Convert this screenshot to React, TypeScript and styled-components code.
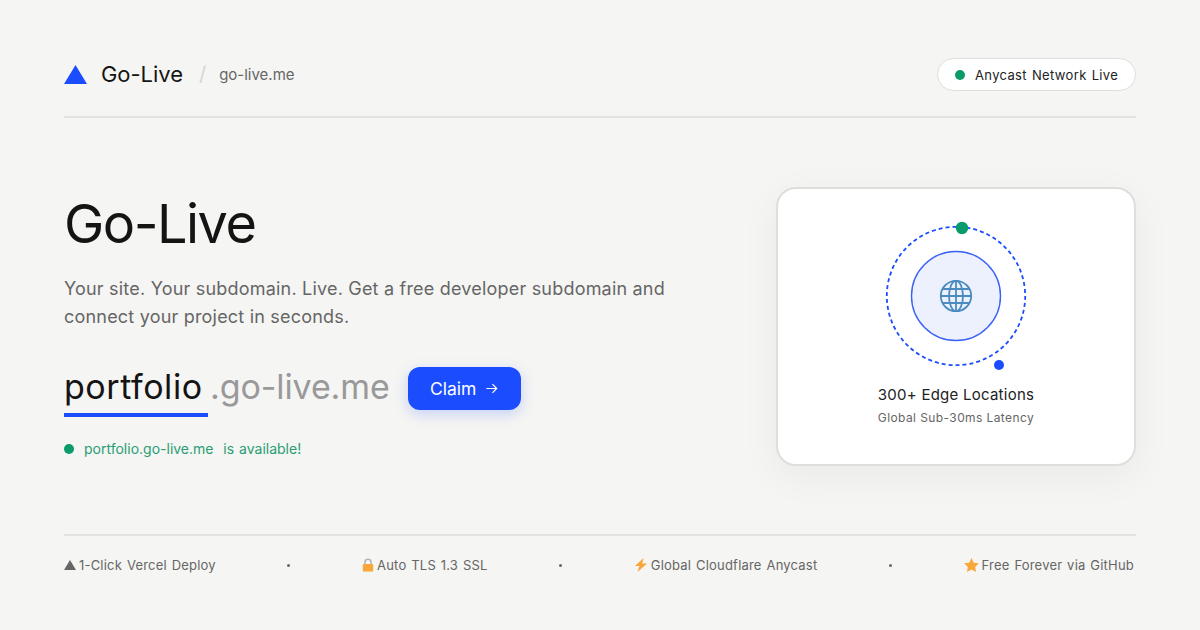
import { Fragment, FunctionComponent, ReactNode } from "react";
import styled, { createGlobalStyle } from "styled-components";

const GlobalStyle = createGlobalStyle`
  html, body {
    margin: 0;
    padding: 0;
    background: #f5f5f3;
  }
  * {
    box-sizing: border-box;
  }
`;

const Page = styled.div`
  width: 1200px;
  height: 630px;
  padding: 58px 64px 0;
  display: flex;
  flex-direction: column;
  background: #f5f5f3;
  font-family: Inter, "Liberation Sans", sans-serif;
  color: #111;
  overflow: hidden;
`;

const Header = styled.header`
  height: 60px;
  padding-bottom: 26px;
  display: flex;
  align-items: center;
  justify-content: space-between;
  border-bottom: 2px solid #e2e2df;
`;

const Brand = styled.div`
  display: flex;
  align-items: center;
`;

const BrandName = styled.span`
  margin-left: 14px;
  font-size: 22px;
  line-height: 28px;
  letter-spacing: -0.05px;
  color: #151515;
`;

const BrandSlash = styled.span`
  margin-left: 16px;
  font-size: 20px;
  color: #d6d6d3;
`;

const BrandDomain = styled.span`
  margin-left: 13px;
  font-size: 15px;
  color: #666;
`;

const Pill = styled.div`
  width: 199px;
  height: 33px;
  padding: 1px 0 0 17px;
  display: flex;
  align-items: center;
  gap: 10px;
  background: #fff;
  border: 1.5px solid #dededb;
  border-radius: 17px;
  font-size: 13px;
  letter-spacing: 0.35px;
  word-spacing: 1px;
  color: #222;
`;

const Dot = styled.span<{ $size: number }>`
  width: ${(p) => p.$size}px;
  height: ${(p) => p.$size}px;
  border-radius: 50%;
  background: #0a9a6b;
  flex: none;
`;

const Main = styled.main`
  height: 418px;
  display: flex;
  justify-content: space-between;
  align-items: center;
  border-bottom: 2px solid #e2e2df;
`;

const Intro = styled.section`
  width: 640px;
  display: flex;
  flex-direction: column;
  margin-top: -3px;
`;

const Title = styled.h1`
  margin: 0;
  font-size: 54px;
  line-height: 68px;
  font-weight: 400;
  letter-spacing: -1.5px;
  color: #141414;
`;

const Lead = styled.p`
  margin: 17px 0 0;
  font-size: 18px;
  line-height: 28px;
  letter-spacing: 0.2px;
  color: #666;
  white-space: nowrap;
`;

const ClaimRow = styled.div`
  margin-top: 34px;
  height: 52px;
  display: flex;
  align-items: flex-start;
`;

const Subdomain = styled.span`
  height: 52px;
  width: 144px;
  font-size: 34px;
  line-height: 44px;
  letter-spacing: 0.55px;
  color: #141414;
  border-bottom: 4px solid #1b4dff;
`;

const Suffix = styled.span`
  margin-left: 2px;
  font-size: 34px;
  line-height: 44px;
  letter-spacing: -0.1px;
  color: #999;
`;

const ClaimButton = styled.button`
  margin: 2px 0 0 18px;
  width: 113px;
  height: 43px;
  display: flex;
  align-items: center;
  justify-content: center;
  gap: 9px;
  padding: 0;
  border: none;
  border-radius: 12px;
  background: #1b4dff;
  color: #fff;
  font-family: inherit;
  font-size: 17.5px;
  box-shadow: 0 4px 14px rgba(27, 77, 255, 0.22);
`;

const Status = styled.div`
  margin-top: 22px;
  display: flex;
  align-items: center;
  gap: 10px;
  font-size: 14px;
  line-height: 20px;
  color: #2a9d74;
  word-spacing: 1px;
  white-space: pre;
`;

const Card = styled.aside`
  width: 360px;
  height: 279px;
  display: flex;
  flex-direction: column;
  align-items: center;
  padding-top: 30px;
  background: #fff;
  border: 2px solid #dededb;
  border-radius: 20px;
  box-shadow: 0 10px 40px rgba(0, 0, 0, 0.05);
`;

const CardTitle = styled.div`
  margin-top: 14px;
  font-size: 15px;
  line-height: 20px;
  letter-spacing: 0.25px;
  color: #222;
`;

const CardSub = styled.div`
  margin-top: 5px;
  font-size: 12px;
  line-height: 16px;
  letter-spacing: 0.4px;
  color: #666;
`;

const Footer = styled.footer`
  padding: 20px 2px 0 0;
  display: flex;
  justify-content: space-between;
  align-items: center;
  font-size: 13px;
  line-height: 18px;
  letter-spacing: 0.2px;
  word-spacing: 1px;
  color: #666;
`;

const FooterItem = styled.span`
  display: flex;
  align-items: center;
  gap: 3px;
  white-space: pre;
`;

const FooterDot = styled.span`
  width: 3px;
  height: 3px;
  border-radius: 50%;
  background: #666;
`;

const TriangleIcon: FunctionComponent<{ size: number; color: string }> = ({
  size,
  color,
}) => (
  <svg width={size} height={(size * 19) / 23} viewBox="0 0 23 19">
    <path d="M11.5 0 23 19H0z" fill={color} />
  </svg>
);

const LockIcon = () => (
  <svg width="12" height="14" viewBox="0 0 12 14">
    <path
      d="M3 6.5V4.2a3 3 0 0 1 6 0v2.3"
      fill="none"
      stroke="#b3b3b3"
      strokeWidth="1.5"
    />
    <rect x="0.8" y="6" width="10.4" height="7.6" rx="1.2" fill="#f9a63a" />
  </svg>
);

const BoltIcon = () => (
  <svg width="14" height="14" viewBox="0 0 14 14">
    <path d="M9.6 0 1 8h4.4L3.6 14 13 5.4H8.2z" fill="#f9a63a" />
  </svg>
);

const StarIcon = () => (
  <svg width="15" height="14" viewBox="0 0 24 23">
    <path
      d="M12 0l3.7 7.6 8.3 1.2-6 5.9 1.4 8.3L12 19l-7.4 4L6 14.7 0 8.8l8.3-1.2z"
      fill="#f9a63a"
    />
  </svg>
);

const ArrowIcon = () => (
  <svg
    width="13"
    height="13"
    viewBox="0 0 14 14"
    fill="none"
    stroke="#fff"
    strokeWidth="1.3"
  >
    <path d="M1.5 7h11M8 2.2 12.6 7 8 11.8" />
  </svg>
);

const OrbitDiagram = () => (
  <svg width="152" height="152" viewBox="0 0 152 152">
    <circle
      cx="76"
      cy="77"
      r="69.2"
      fill="none"
      stroke="#1b4dff"
      strokeWidth="1.8"
      strokeDasharray="4 3"
    />
    <circle cx="76" cy="77" r="44.5" fill="#edf1fe" stroke="#3a62f5" strokeWidth="1.4" />
    <g fill="none" stroke="#4a8cc0" strokeWidth="1.8">
      <circle cx="76" cy="77" r="15.2" />
      <ellipse cx="76" cy="77" rx="7" ry="15.2" />
      <path d="M76 61.8v30.4M60.8 77h30.4M62.8 70h26.4M62.8 84h26.4" />
    </g>
    <circle cx="82" cy="9" r="6.2" fill="#0a9a6b" />
    <circle cx="119" cy="146" r="5" fill="#1b4dff" />
  </svg>
);

const footerItems: { icon: ReactNode; label: string }[] = [
  { icon: <TriangleIcon size={12} color="#666" />, label: "1-Click Vercel Deploy" },
  { icon: <LockIcon />, label: "Auto TLS 1.3 SSL" },
  { icon: <BoltIcon />, label: "Global Cloudflare Anycast" },
  { icon: <StarIcon />, label: "Free Forever via GitHub" },
];

const App: FunctionComponent = () => {
  return (
    <Page>
      <GlobalStyle />
      <Header>
        <Brand>
          <TriangleIcon size={23} color="#1b4dff" />
          <BrandName>Go-Live</BrandName>
          <BrandSlash>/</BrandSlash>
          <BrandDomain>go-live.me</BrandDomain>
        </Brand>
        <Pill>
          <Dot $size={10} />
          Anycast Network Live
        </Pill>
      </Header>
      <Main>
        <Intro>
          <Title>Go-Live</Title>
          <Lead>
            Your site. Your subdomain. Live. Get a free developer subdomain and
            <br />
            connect your project in seconds.
          </Lead>
          <ClaimRow>
            <Subdomain>portfolio</Subdomain>
            <Suffix>.go-live.me</Suffix>
            <ClaimButton>
              Claim
              <ArrowIcon />
            </ClaimButton>
          </ClaimRow>
          <Status>
            <Dot $size={10} />
            portfolio.go-live.me  is available!
          </Status>
        </Intro>
        <Card>
          <OrbitDiagram />
          <CardTitle>300+ Edge Locations</CardTitle>
          <CardSub>Global Sub-30ms Latency</CardSub>
        </Card>
      </Main>
      <Footer>
        {footerItems.map((item, i) => (
          <Fragment key={item.label}>
            {i > 0 && <FooterDot />}
            <FooterItem>
              {item.icon}
              {item.label}
            </FooterItem>
          </Fragment>
        ))}
      </Footer>
    </Page>
  );
};

export default App;
